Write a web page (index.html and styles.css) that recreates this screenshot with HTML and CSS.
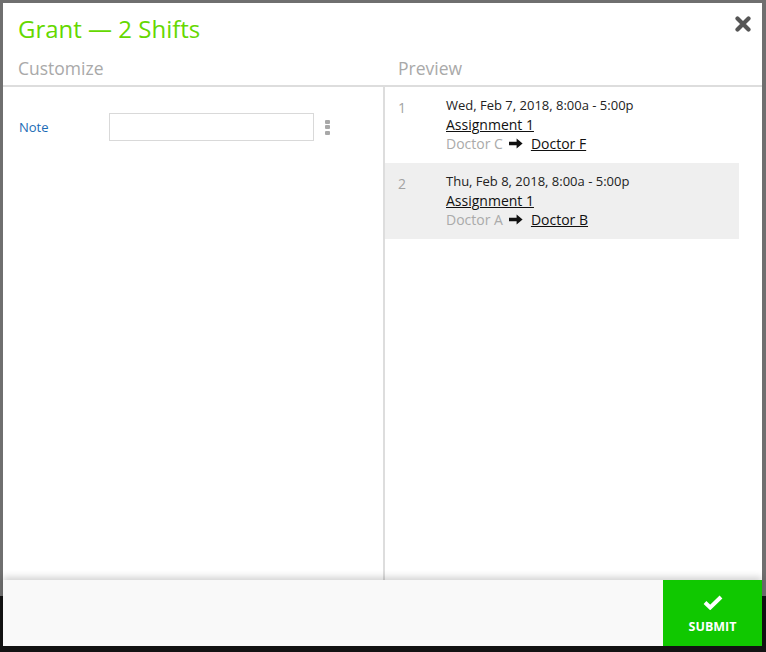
FILE: index.html
```html
<!DOCTYPE html>
<html>
<head>
<meta charset="utf-8">
<link rel="stylesheet" href="styles.css">
</head>
<body>
<div class="page">
  <div class="modal">
    <div class="title-row">
      <h1 class="title">Grant — 2 Shifts</h1>
      <button class="close" aria-label="Close">
        <svg width="16" height="16" viewBox="0 0 16 16"><path d="M2.5 2.5L13.5 13.5M13.5 2.5L2.5 13.5" stroke="#555" stroke-width="4.2" stroke-linecap="round"/></svg>
      </button>
    </div>
    <div class="col-heads">
      <div class="col-head left">Customize</div>
      <div class="col-head right">Preview</div>
    </div>
    <div class="body">
      <div class="customize">
        <div class="field">
          <label class="field-label">Note</label>
          <input class="field-input" type="text">
          <span class="kebab"><i></i><i></i><i></i></span>
        </div>
      </div>
      <div class="preview">
        <div class="shift">
          <div class="num">1</div>
          <div class="info">
            <div class="when">Wed, Feb 7, 2018, 8:00a - 5:00p</div>
            <div class="line"><a class="link">Assignment 1</a></div>
            <div class="line swap"><span class="from">Doctor C</span><svg class="arrow" width="14" height="11" viewBox="0 0 14 11"><path d="M0 3.7H7.6V0.4L13.6 5.5L7.6 10.6V7.3H0Z" fill="#111"/></svg><a class="link">Doctor F</a></div>
          </div>
        </div>
        <div class="shift alt">
          <div class="num">2</div>
          <div class="info">
            <div class="when">Thu, Feb 8, 2018, 8:00a - 5:00p</div>
            <div class="line"><a class="link">Assignment 1</a></div>
            <div class="line swap"><span class="from">Doctor A</span><svg class="arrow" width="14" height="11" viewBox="0 0 14 11"><path d="M0 3.7H7.6V0.4L13.6 5.5L7.6 10.6V7.3H0Z" fill="#111"/></svg><a class="link">Doctor B</a></div>
          </div>
        </div>
      </div>
    </div>
    <div class="footer">
      <button class="submit">
        <svg width="20" height="15" viewBox="0 0 20 15"><path d="M2 7.5L7.2 12.5L18 2" stroke="#fff" stroke-width="4" fill="none" stroke-linejoin="miter"/></svg>
        <span>SUBMIT</span>
      </button>
    </div>
  </div>
</div>
</body>
</html>
```

FILE: styles.css
```css
html, body {
  margin: 0;
  padding: 0;
}
body {
  font-family: "Open Sans", "Liberation Sans", sans-serif;
  background: linear-gradient(#6f6f6f 0, #6f6f6f 596px, #131313 596px, #131313 100%);
  width: 766px;
  height: 652px;
  overflow: hidden;
}
.page {
  padding: 3px 0 0 3px;
}
.modal {
  width: 759px;
  height: 643px;
  background: #fff;
  display: flex;
  flex-direction: column;
}
.title-row {
  display: flex;
  justify-content: space-between;
  align-items: flex-start;
  padding: 9px 11px 0 15px;
}
.title {
  margin: 0;
  font-size: 24px;
  line-height: 33px;
  font-weight: 400;
  color: #65d800;
}
.close {
  margin-top: 4px;
  padding: 0;
  border: 0;
  background: none;
  width: 16px;
  height: 16px;
  display: block;
}
.close svg { display: block; }
.col-heads {
  display: flex;
  padding-top: 11px;
  padding-bottom: 5px;
  border-bottom: 2px solid #dddddd;
}
.col-head {
  font-size: 17.5px;
  line-height: 24px;
  color: #a9a9a9;
}
.col-head.left {
  width: 380px;
  padding-left: 15px;
  box-sizing: border-box;
}
.col-head.right {
  padding-left: 15px;
}
.body {
  flex: 1;
  display: flex;
  min-height: 0;
}
.customize {
  border-right: 2px solid #dddddd;
  padding: 26px 0 0 16px;
  width: 364px;
}
.field {
  display: flex;
  align-items: center;
}
.field-label {
  width: 90px;
  font-size: 13px;
  color: #1b6bb5;
}
.field-input {
  width: 205px;
  height: 28px;
  box-sizing: border-box;
  border: 1px solid #d9d9d9;
  margin: 0;
  padding: 0 6px;
  font-family: inherit;
}
.kebab {
  margin-left: 11px;
  display: flex;
  flex-direction: column;
  gap: 1.5px;
}
.kebab i {
  display: block;
  width: 5px;
  height: 4px;
  border-radius: 1px;
  background: #a8a8a8;
}
.preview {
  flex: 1;
  padding-right: 23px;
}
.shift {
  display: flex;
  padding: 9px 0 10px 13px;
  font-size: 13px;
  line-height: 19px;
  color: #222;
}
.shift.alt {
  background: #efefef;
}
.num {
  width: 48px;
  font-size: 14px;
  color: #a3a3a3;
  padding-top: 2px;
}
.line {
  font-size: 14px;
}
.link {
  color: #111;
  text-decoration: underline;
}
.swap {
  display: flex;
  align-items: center;
}
.from {
  color: #aaa;
}
.arrow {
  margin: 0 8px 0 6px;
  display: block;
}
.footer {
  height: 66px;
  background: #f9f9f9;
  display: flex;
  justify-content: flex-end;
  box-shadow: 0 -3px 7px rgba(0, 0, 0, 0.18);
  position: relative;
}
.submit {
  width: 99px;
  height: 66px;
  border: 0;
  margin: 0;
  background: #10c800;
  color: #fff;
  font-family: inherit;
  font-weight: 700;
  font-size: 12.5px;
  display: flex;
  flex-direction: column;
  align-items: center;
  justify-content: flex-start;
  padding: 15px 0 0;
  box-sizing: border-box;
  gap: 8px;
}
.submit svg { display: block; }
.submit span { line-height: 17px; }
```
